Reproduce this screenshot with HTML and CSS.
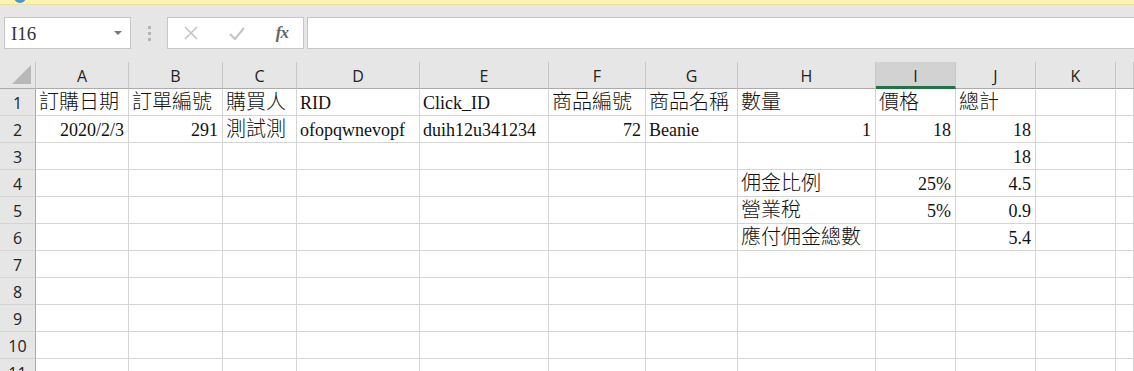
FILE: index.html
```html
<!DOCTYPE html>
<html>
<head>
  <meta charset="utf-8">
  <link rel="stylesheet" href="styles.css">
  <title>Sheet1</title>
</head>
<body>
  <div class="msgbar"><span class="msgicon"></span></div>

  <div class="toolbar">
    <div class="namebox">
      <span class="ref">I16</span>
      <span class="caret"></span>
    </div>
    <div class="grip"><i></i><i></i><i></i></div>
    <div class="fxbox">
      <svg class="ico" width="16" height="16" viewBox="0 0 16 16"><path d="M2 2 L14 14 M14 2 L2 14" stroke="#c4c4c4" stroke-width="1.6" fill="none"/></svg>
      <svg class="ico" width="18" height="16" viewBox="0 0 18 16"><path d="M2 9 L7 14 L16 3" stroke="#c4c4c4" stroke-width="2" fill="none"/></svg>
      <span class="fx">fx</span>
    </div>
    <div class="formula"></div>
  </div>

  <div class="sheet">
    <div class="corner"><span class="tri"></span></div>
    <div class="colhead">A</div>
    <div class="colhead">B</div>
    <div class="colhead">C</div>
    <div class="colhead">D</div>
    <div class="colhead">E</div>
    <div class="colhead">F</div>
    <div class="colhead">G</div>
    <div class="colhead">H</div>
    <div class="colhead sel">I</div>
    <div class="colhead">J</div>
    <div class="colhead">K</div>
    <div class="colhead"></div>

    <div class="rowhead">1</div>
    <div class="cell"><span class="cjk">訂購日期</span></div>
    <div class="cell"><span class="cjk">訂單編號</span></div>
    <div class="cell"><span class="cjk">購買人</span></div>
    <div class="cell">RID</div>
    <div class="cell">Click_ID</div>
    <div class="cell"><span class="cjk">商品編號</span></div>
    <div class="cell"><span class="cjk">商品名稱</span></div>
    <div class="cell"><span class="cjk">數量</span></div>
    <div class="cell"><span class="cjk">價格</span></div>
    <div class="cell"><span class="cjk">總計</span></div>
    <div class="cell"></div>
    <div class="cell"></div>

    <div class="rowhead">2</div>
    <div class="cell num">2020/2/3</div>
    <div class="cell num">291</div>
    <div class="cell"><span class="cjk">測試測</span></div>
    <div class="cell">ofopqwnevopf</div>
    <div class="cell">duih12u341234</div>
    <div class="cell num">72</div>
    <div class="cell">Beanie</div>
    <div class="cell num">1</div>
    <div class="cell num">18</div>
    <div class="cell num">18</div>
    <div class="cell"></div>
    <div class="cell"></div>

    <div class="rowhead">3</div>
    <div class="cell"></div>
    <div class="cell"></div>
    <div class="cell"></div>
    <div class="cell"></div>
    <div class="cell"></div>
    <div class="cell"></div>
    <div class="cell"></div>
    <div class="cell"></div>
    <div class="cell"></div>
    <div class="cell num">18</div>
    <div class="cell"></div>
    <div class="cell"></div>

    <div class="rowhead">4</div>
    <div class="cell"></div>
    <div class="cell"></div>
    <div class="cell"></div>
    <div class="cell"></div>
    <div class="cell"></div>
    <div class="cell"></div>
    <div class="cell"></div>
    <div class="cell"><span class="cjk">佣金比例</span></div>
    <div class="cell num">25%</div>
    <div class="cell num">4.5</div>
    <div class="cell"></div>
    <div class="cell"></div>

    <div class="rowhead">5</div>
    <div class="cell"></div>
    <div class="cell"></div>
    <div class="cell"></div>
    <div class="cell"></div>
    <div class="cell"></div>
    <div class="cell"></div>
    <div class="cell"></div>
    <div class="cell"><span class="cjk">營業稅</span></div>
    <div class="cell num">5%</div>
    <div class="cell num">0.9</div>
    <div class="cell"></div>
    <div class="cell"></div>

    <div class="rowhead">6</div>
    <div class="cell"></div>
    <div class="cell"></div>
    <div class="cell"></div>
    <div class="cell"></div>
    <div class="cell"></div>
    <div class="cell"></div>
    <div class="cell"></div>
    <div class="cell"><span class="cjk">應付佣金總數</span></div>
    <div class="cell"></div>
    <div class="cell num">5.4</div>
    <div class="cell"></div>
    <div class="cell"></div>

    <div class="rowhead">7</div>
    <div class="cell"></div><div class="cell"></div><div class="cell"></div><div class="cell"></div>
    <div class="cell"></div><div class="cell"></div><div class="cell"></div><div class="cell"></div>
    <div class="cell"></div><div class="cell"></div><div class="cell"></div><div class="cell"></div>

    <div class="rowhead">8</div>
    <div class="cell"></div><div class="cell"></div><div class="cell"></div><div class="cell"></div>
    <div class="cell"></div><div class="cell"></div><div class="cell"></div><div class="cell"></div>
    <div class="cell"></div><div class="cell"></div><div class="cell"></div><div class="cell"></div>

    <div class="rowhead">9</div>
    <div class="cell"></div><div class="cell"></div><div class="cell"></div><div class="cell"></div>
    <div class="cell"></div><div class="cell"></div><div class="cell"></div><div class="cell"></div>
    <div class="cell"></div><div class="cell"></div><div class="cell"></div><div class="cell"></div>

    <div class="rowhead">10</div>
    <div class="cell"></div><div class="cell"></div><div class="cell"></div><div class="cell"></div>
    <div class="cell"></div><div class="cell"></div><div class="cell"></div><div class="cell"></div>
    <div class="cell"></div><div class="cell"></div><div class="cell"></div><div class="cell"></div>

    <div class="rowhead">11</div>
    <div class="cell"></div><div class="cell"></div><div class="cell"></div><div class="cell"></div>
    <div class="cell"></div><div class="cell"></div><div class="cell"></div><div class="cell"></div>
    <div class="cell"></div><div class="cell"></div><div class="cell"></div><div class="cell"></div>
  </div>
</body>
</html>
```

FILE: styles.css
```css
html, body {
  margin: 0;
  height: 371px;
  overflow: hidden;
}
body {
  background: #e6e6e6;
  font-family: "Liberation Serif", "Noto Sans CJK TC", serif;
}

.msgbar {
  position: relative;
  height: 4px;
  background: #fcf3ae;
  border-bottom: 1px solid #ece2a0;
}
.msgicon {
  position: absolute;
  left: 14px;
  top: -9px;
  width: 12px;
  height: 12px;
  border-radius: 50%;
  background: #4a95d8;
}

.toolbar {
  display: flex;
  align-items: center;
  height: 32px;
  padding: 12px 0 13px 4px;
}
.namebox {
  display: flex;
  align-items: center;
  justify-content: space-between;
  box-sizing: border-box;
  width: 127px;
  height: 32px;
  padding: 0 8px 0 6px;
  background: #fff;
  border: 1px solid #c6c6c6;
}
.ref {
  font-family: "Liberation Serif", serif;
  font-size: 19px;
  color: #333;
  padding-top: 2px;
}
.caret {
  width: 0;
  height: 0;
  border-left: 4px solid transparent;
  border-right: 4px solid transparent;
  border-top: 4px solid #777;
}
.grip {
  display: flex;
  flex-direction: column;
  gap: 3px;
  margin: 0 16px 0 17px;
}
.grip i {
  width: 3px;
  height: 3px;
  background: #b4b4b4;
}
.fxbox {
  display: flex;
  align-items: center;
  justify-content: space-between;
  box-sizing: border-box;
  width: 137px;
  height: 32px;
  padding: 0 15px 0 15px;
  background: #fff;
  border: 1px solid #c6c6c6;
}
.fx {
  font-family: "Liberation Serif", serif;
  font-style: italic;
  font-size: 17px;
  color: #666;
  font-weight: bold;
  letter-spacing: -1px;
}
.formula {
  flex: 1;
  height: 32px;
  box-sizing: border-box;
  margin-left: 3px;
  background: #fff;
  border: 1px solid #c6c6c6;
  border-right: none;
}

.sheet {
  display: grid;
  grid-template-columns: 36px 93px 94px 74px 123px 129px 97px 92px 138px 80px 80px 80px 1fr;
  grid-auto-rows: 27px;
  background: #fff;
}
.corner, .colhead, .rowhead, .cell {
  box-sizing: border-box;
}
.corner {
  position: relative;
  background: #e6e6e6;
  border-right: 1px solid #c6c6c6;
  border-bottom: 1px solid #ababab;
}
.tri {
  position: absolute;
  right: 4px;
  bottom: 4px;
  width: 0;
  height: 0;
  border-left: 19px solid transparent;
  border-bottom: 19px solid #b8b8b8;
}
.colhead {
  display: flex;
  align-items: center;
  justify-content: center;
  background: #e6e6e6;
  border-right: 1px solid #c6c6c6;
  border-bottom: 1px solid #ababab;
  font-family: "Open Sans", sans-serif;
  font-size: 16px;
  color: #222;
  padding-top: 1px;
}
.colhead.sel {
  background: #d2d2d2;
  border-bottom: 3px solid #217346;
  padding-top: 3px;
}
.rowhead {
  display: flex;
  align-items: center;
  justify-content: center;
  background: #e6e6e6;
  border-right: 1px solid #ababab;
  border-bottom: 1px solid #d4d4d4;
  font-family: "Open Sans", sans-serif;
  font-size: 16px;
  color: #222;
  padding-top: 1px;
}
.cell {
  display: flex;
  align-items: flex-end;
  padding: 0 4px 1px 3px;
  border-right: 1px solid #d4d4d4;
  border-bottom: 1px solid #d4d4d4;
  font-size: 18px;
  color: #111;
  white-space: nowrap;
  overflow: visible;
}
.cell.num {
  justify-content: flex-end;
}
.cjk {
  font-size: 20px;
  font-weight: 300;
  line-height: 24px;
}
```
